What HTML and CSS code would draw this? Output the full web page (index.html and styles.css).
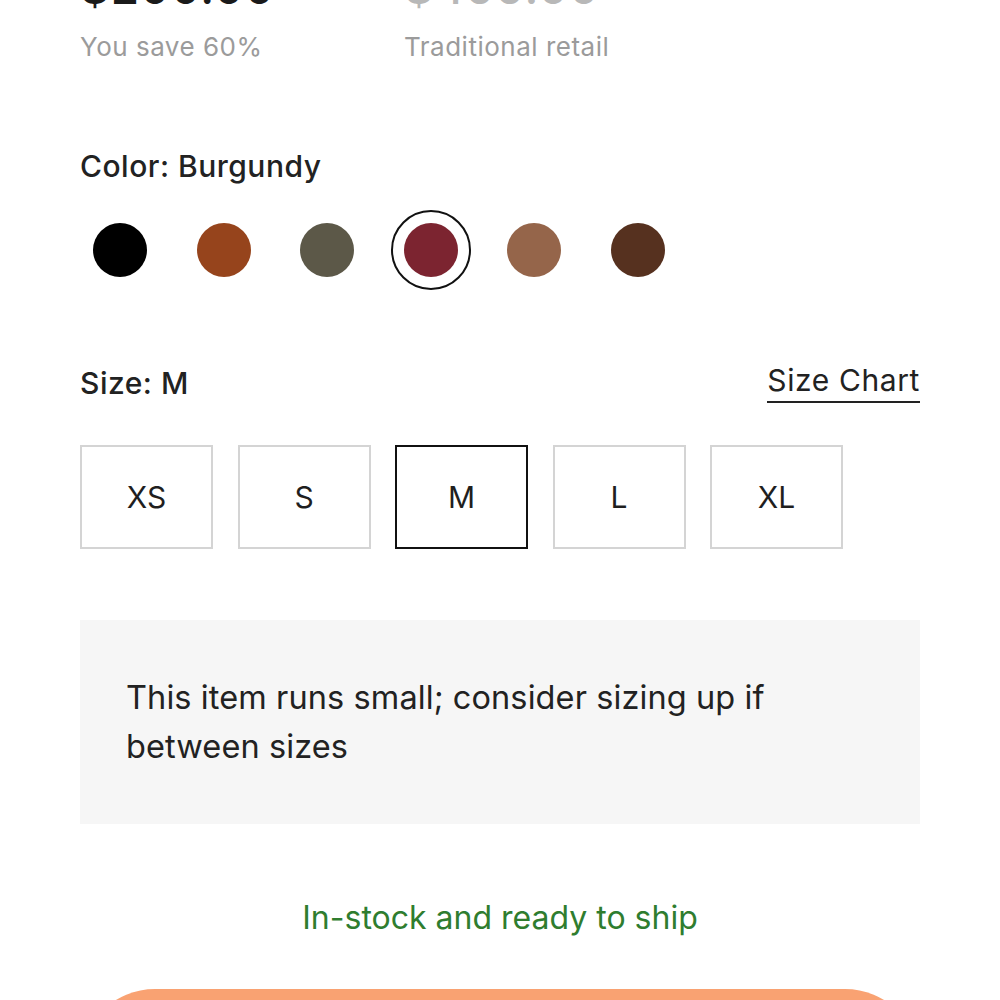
FILE: index.html
```html
<!DOCTYPE html>
<html lang="en">
<head>
<meta charset="utf-8">
<link rel="stylesheet" href="styles.css">
</head>
<body>
<main class="product">
  <section class="prices">
    <div class="price-col">
      <div class="amount">$200.00</div>
      <div class="price-label">You save 60%</div>
    </div>
    <div class="price-col">
      <div class="amount amount-retail">$499.00</div>
      <div class="price-label">Traditional retail</div>
    </div>
  </section>

  <section class="colors">
    <h2 class="option-title">Color: Burgundy</h2>
    <div class="swatches">
      <span class="swatch"><span class="dot dot-black"></span></span>
      <span class="swatch"><span class="dot dot-rust"></span></span>
      <span class="swatch"><span class="dot dot-olive"></span></span>
      <span class="swatch swatch-selected"><span class="dot dot-burgundy"></span></span>
      <span class="swatch"><span class="dot dot-tan"></span></span>
      <span class="swatch"><span class="dot dot-brown"></span></span>
    </div>
  </section>

  <section class="sizes">
    <div class="sizes-head">
      <h2 class="option-title">Size: M</h2>
      <a class="size-chart">Size Chart</a>
    </div>
    <div class="size-list">
      <button class="size">XS</button>
      <button class="size">S</button>
      <button class="size size-selected">M</button>
      <button class="size">L</button>
      <button class="size">XL</button>
    </div>
  </section>

  <div class="note">This item runs small; consider sizing up if between sizes</div>

  <p class="stock">In-stock and ready to ship</p>

  <button class="cta"></button>
</main>
</body>
</html>
```

FILE: styles.css
```css
html, body {
  margin: 0;
  padding: 0;
  background: #ffffff;
}

body {
  font-family: Inter, "Liberation Sans", sans-serif;
  color: #1f1f1f;
  overflow: hidden;
  height: 1000px;
}

.product {
  padding: 0 80px;
}

.prices {
  display: grid;
  grid-template-columns: 324px 1fr;
  margin-top: -38px;
}

.amount {
  font-size: 46px;
  line-height: 50px;
  font-weight: 500;
  color: #1a1a1a;
  letter-spacing: 1px;
}

.amount-retail {
  color: #b8b8b8;
}

.price-label {
  font-size: 26px;
  line-height: 30px;
  margin-top: 20px;
  color: #9b9b9b;
  font-weight: 400;
  letter-spacing: 0.5px;
}

.option-title {
  margin: 0;
  font-size: 30px;
  line-height: 34px;
  font-weight: 500;
  color: #222222;
  letter-spacing: 0.5px;
}

.colors {
  margin-top: 87px;
}

.swatches {
  display: flex;
  gap: 23.5px;
  margin-top: 27px;
}

.swatch {
  width: 80px;
  height: 80px;
  border-radius: 50%;
  display: flex;
  align-items: center;
  justify-content: center;
  box-sizing: border-box;
}

.swatch-selected {
  border: 2px solid #111111;
}

.dot {
  width: 54px;
  height: 54px;
  border-radius: 50%;
  display: block;
}

.dot-black { background: #000000; }
.dot-rust { background: #96441c; }
.dot-olive { background: #5c5848; }
.dot-burgundy { background: #7c2430; }
.dot-tan { background: #95654a; }
.dot-brown { background: #56311f; }

.sizes {
  margin-top: 76px;
}

.sizes-head {
  display: flex;
  justify-content: space-between;
  align-items: flex-start;
}

.size-chart {
  font-size: 30px;
  line-height: 32px;
  color: #222222;
  padding-bottom: 5px;
  border-bottom: 2px solid #222222;
  letter-spacing: 0.6px;
  margin-top: -2px;
}

.size-list {
  display: flex;
  gap: 24.5px;
  margin-top: 42px;
}

.size {
  width: 133px;
  height: 104px;
  box-sizing: border-box;
  border: 2px solid #d4d4d4;
  background: #ffffff;
  font-family: inherit;
  font-size: 30px;
  color: #1f1f1f;
  font-weight: 400;
  padding: 0;
}

.size-selected {
  border-color: #111111;
}

.note {
  margin-top: 71px;
  background: #f6f6f6;
  height: 204px;
  box-sizing: border-box;
  padding: 53px 80px 0 46px;
  font-size: 32.5px;
  line-height: 49px;
  color: #222222;
  letter-spacing: 0.1px;
}

.stock {
  margin: 74px 0 0;
  text-align: center;
  font-size: 32px;
  line-height: 40px;
  color: #2f7d2f;
}

.cta {
  display: block;
  width: 100%;
  height: 150px;
  margin-top: 51px;
  border: none;
  border-radius: 75px;
  background: #f9a272;
}
```
